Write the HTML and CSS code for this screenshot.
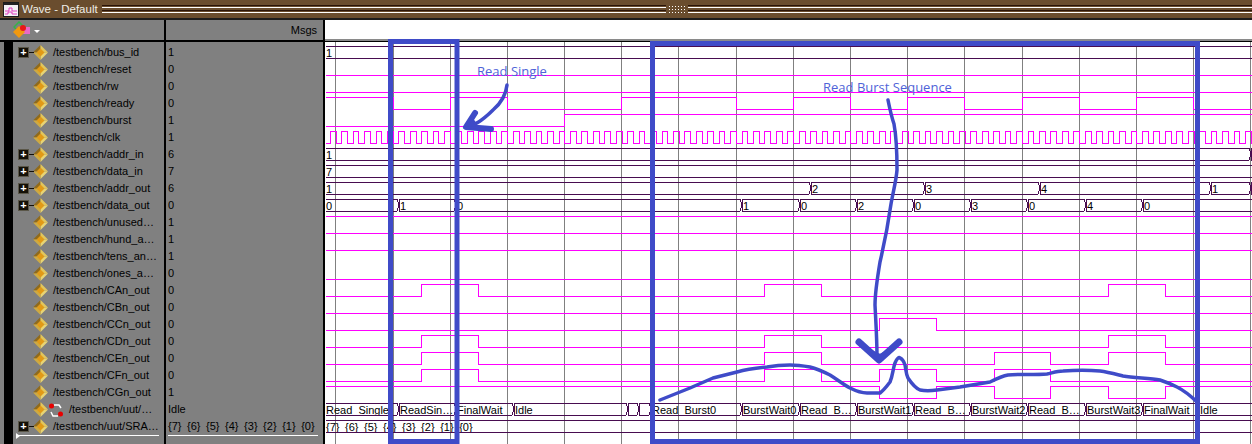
FILE: index.html
```html
<!DOCTYPE html>
<html>
<head>
  <title>Wave - Default</title>
  <link rel="stylesheet" href="styles.css">
</head>
<body>
  <svg class="defs" width="0" height="0">
    <symbol id="diamond" viewBox="0 0 15 15">
      <polygon points="7.5,0 0,7.5 7.5,7.5" fill="#8f6a1c"/>
      <polygon points="7.5,0 15,7.5 7.5,7.5" fill="#e2c65c"/>
      <polygon points="15,7.5 7.5,15 7.5,7.5" fill="#e8d474"/>
      <polygon points="0,7.5 7.5,15 7.5,7.5" fill="#cdaa44"/>
      <polygon points="7.5,3.5 3.5,7.5 7.5,11.5 11.5,7.5" fill="#e19a17"/>
    </symbol>
  </svg>

  <div class="titlebar">
    <svg class="title-icon" width="16" height="15" viewBox="0 0 16 15">
      <rect x="0.5" y="0.5" width="15" height="14" fill="#f4f0f4" stroke="#1c1c1c"/>
      <rect x="1" y="1" width="14" height="2" fill="#222"/>
      <path d="M2 9h4v-3h3v3h5M2 12h3v-2h4v2h5" fill="none" stroke="#e23cc0"/>
    </svg>
    <span class="title-text">Wave - Default</span>
    <div class="grip"></div>
    <div class="grip-dots"></div>
    <div class="grip"></div>
  </div>

  <div class="window">
    <div class="names">
      <div class="pane-head names-head">
        <svg width="18" height="18" viewBox="0 0 18 18">
          <polygon points="6,1 11,6 6,11 1,6" fill="none" stroke="#35b24a" stroke-width="1.5"/>
          <rect x="10" y="6" width="7" height="7" fill="#e868c8"/>
          <polygon points="6,5 12,11 6,17 0,11" fill="#f0980f"/>
          <circle cx="10" cy="7" r="3" fill="#e81818"/>
        </svg>
        <span class="drop-arrow"></span>
      </div>
      <div class="name-list">
        <div class="row"><span class="tree"><span class="expander">+</span></span><svg class="diamond"><use href="#diamond"/></svg><span class="label">/testbench/bus_id</span></div>
        <div class="row"><span class="tree"></span><svg class="diamond"><use href="#diamond"/></svg><span class="label">/testbench/reset</span></div>
        <div class="row"><span class="tree"></span><svg class="diamond"><use href="#diamond"/></svg><span class="label">/testbench/rw</span></div>
        <div class="row"><span class="tree"></span><svg class="diamond"><use href="#diamond"/></svg><span class="label">/testbench/ready</span></div>
        <div class="row"><span class="tree"></span><svg class="diamond"><use href="#diamond"/></svg><span class="label">/testbench/burst</span></div>
        <div class="row"><span class="tree"></span><svg class="diamond"><use href="#diamond"/></svg><span class="label">/testbench/clk</span></div>
        <div class="row"><span class="tree"><span class="expander">+</span></span><svg class="diamond"><use href="#diamond"/></svg><span class="label">/testbench/addr_in</span></div>
        <div class="row"><span class="tree"><span class="expander">+</span></span><svg class="diamond"><use href="#diamond"/></svg><span class="label">/testbench/data_in</span></div>
        <div class="row"><span class="tree"><span class="expander">+</span></span><svg class="diamond"><use href="#diamond"/></svg><span class="label">/testbench/addr_out</span></div>
        <div class="row"><span class="tree"><span class="expander">+</span></span><svg class="diamond"><use href="#diamond"/></svg><span class="label">/testbench/data_out</span></div>
        <div class="row"><span class="tree"></span><svg class="diamond"><use href="#diamond"/></svg><span class="label">/testbench/unused…</span></div>
        <div class="row"><span class="tree"></span><svg class="diamond"><use href="#diamond"/></svg><span class="label">/testbench/hund_a…</span></div>
        <div class="row"><span class="tree"></span><svg class="diamond"><use href="#diamond"/></svg><span class="label">/testbench/tens_an…</span></div>
        <div class="row"><span class="tree"></span><svg class="diamond"><use href="#diamond"/></svg><span class="label">/testbench/ones_a…</span></div>
        <div class="row"><span class="tree"></span><svg class="diamond"><use href="#diamond"/></svg><span class="label">/testbench/CAn_out</span></div>
        <div class="row"><span class="tree"></span><svg class="diamond"><use href="#diamond"/></svg><span class="label">/testbench/CBn_out</span></div>
        <div class="row"><span class="tree"></span><svg class="diamond"><use href="#diamond"/></svg><span class="label">/testbench/CCn_out</span></div>
        <div class="row"><span class="tree"></span><svg class="diamond"><use href="#diamond"/></svg><span class="label">/testbench/CDn_out</span></div>
        <div class="row"><span class="tree"></span><svg class="diamond"><use href="#diamond"/></svg><span class="label">/testbench/CEn_out</span></div>
        <div class="row"><span class="tree"></span><svg class="diamond"><use href="#diamond"/></svg><span class="label">/testbench/CFn_out</span></div>
        <div class="row"><span class="tree"></span><svg class="diamond"><use href="#diamond"/></svg><span class="label">/testbench/CGn_out</span></div>
        <div class="row"><span class="tree"></span><svg class="diamond"><use href="#diamond"/></svg>
          <svg class="fsm-icon" width="16" height="16" viewBox="0 0 16 16">
            <path d="M6 3h5l2 3M10 14H5L3 10" fill="none" stroke="#fff" stroke-width="1.5"/>
            <circle cx="3.5" cy="4" r="2.5" fill="#e80000"/>
            <circle cx="12.5" cy="12" r="2.5" fill="#e80000"/>
          </svg>
          <span class="label">/testbench/uut/…</span></div>
        <div class="row"><span class="tree"><span class="expander">+</span></span><svg class="diamond"><use href="#diamond"/></svg><span class="label">/testbench/uut/SRA…</span></div>
        <div class="scroll-line names-scroll"><span class="scroll-mark"></span></div>
      </div>
    </div>

    <div class="values">
      <div class="pane-head values-head">Msgs</div>
      <div class="value-list">
        <div class="row"><span class="value">1</span></div>
        <div class="row"><span class="value">0</span></div>
        <div class="row"><span class="value">0</span></div>
        <div class="row"><span class="value">0</span></div>
        <div class="row"><span class="value">1</span></div>
        <div class="row"><span class="value">1</span></div>
        <div class="row"><span class="value">6</span></div>
        <div class="row"><span class="value">7</span></div>
        <div class="row"><span class="value">6</span></div>
        <div class="row"><span class="value">0</span></div>
        <div class="row"><span class="value">1</span></div>
        <div class="row"><span class="value">1</span></div>
        <div class="row"><span class="value">1</span></div>
        <div class="row"><span class="value">0</span></div>
        <div class="row"><span class="value">0</span></div>
        <div class="row"><span class="value">0</span></div>
        <div class="row"><span class="value">0</span></div>
        <div class="row"><span class="value">0</span></div>
        <div class="row"><span class="value">0</span></div>
        <div class="row"><span class="value">0</span></div>
        <div class="row"><span class="value">1</span></div>
        <div class="row"><span class="value">Idle</span></div>
        <div class="row"><span class="value">{7} {6} {5} {4} {3} {2} {1} {0}</span></div>
        <div class="scroll-line"></div>
      </div>
    </div>

    <div class="waves">
      <div class="wave-head"></div>
      <svg class="wave-plot" id="plot" width="927" height="402" viewBox="325 42 927 402">
        <g id="traces"></g>
        <g class="ink">
          <rect x="390.5" y="41.5" width="66.5" height="400"/>
          <rect x="652.5" y="43.5" width="545" height="398"/>
          <path class="ink-arrow" d="M507 85C506 95 500 104 493 110C487 116 482 120 477 123L466 127"/>
          <path class="ink-head" d="M475 113L466 127L491 129"/>
          <path class="ink-fill" d="M472 118L466 127L478 128Z"/>
          <path class="ink-arrow" d="M888 100C890 110 892 118 894 124C897 140 897 155 897 170C896 182 893 192 891 204C888 225 884 245 880 262C877 280 875 295 875 305C876 325 877 340 877 357"/>
          <path class="ink-head wide" d="M859 342L879 360L899 342"/>
          <path class="ink-fill" d="M865 348L879 362L893 348L880 355Z"/>
          <path class="ink-curve" d="M660 400L690 388L713 378L737 372C748 369 757 368 767 367C778 365 785 365 790 365C798 365 804 366 810 367C818 369 824 372 830 375C838 380 844 385 850 388C856 391 861 393 867 393L880 393C884 390 887 386 890 382C893 375 893 368 895 363C897 358 899 357 900 358C903 359 904 362 905 365C906 370 906 374 908 378C912 384 915 388 920 390C925 391 930 391 937 390C945 389 952 388 960 387L990 382C996 379 1002 376 1008 375C1020 374 1035 375 1047 374C1052 373 1057 371 1063 371C1075 370 1090 370 1100 371C1108 372 1115 374 1123 376C1135 378 1150 378 1160 380C1166 382 1171 384 1177 387C1185 391 1192 397 1198 403"/>
          <text class="ink-text" x="477" y="76">Read Single</text>
          <text class="ink-text" x="823" y="92">Read Burst Sequence</text>
        </g>
      </svg>
    </div>
  </div>

  <script>
    const SVG_NS = "http://www.w3.org/2000/svg";
    const traces = document.getElementById("traces");

    const LEFT = 326;
    const RIGHT = 1252;
    const gridLines = [335, 393, 450, 507, 564, 621, 678, 736, 793, 850, 907, 964, 1022, 1079, 1136, 1193, 1250];

    // row index, first level, edges
    const bits = [
      [1, 0, []],
      [2, 0, []],
      [3, 1, [393, 450, 507, 621, 736, 793, 850, 907, 964, 1022, 1079, 1136, 1193]],
      [4, 0, [564]],
      [10, 1, []],
      [11, 1, []],
      [12, 1, []],
      [13, 0, []],
      [14, 0, [421, 478, 764, 821, 1108, 1165]],
      [15, 0, []],
      [16, 0, [879, 936]],
      [17, 0, [421, 478, 764, 821, 1108, 1165]],
      [18, 0, [421, 478, 764, 821, 994, 1050, 1108, 1165]],
      [19, 0, [421, 478, 764, 821, 879, 936, 994, 1050]],
      [20, 1, [879, 936, 994, 1050, 1108, 1165]]
    ];

    // row index, then [x, text] for every value
    const buses = [
      [0, [[324, "1"]]],
      [6, [[324, "1"], [1250, ""]]],
      [7, [[324, "7"]]],
      [8, [[324, "1"], [810, "2"], [924, "3"], [1039, "4"], [1210, "1"], [1250, ""]]],
      [9, [[324, "0"], [398, "1"], [455, "0"], [741, "1"], [799, "0"], [856, "2"], [913, "0"], [970, "3"], [1027, "0"], [1085, "4"], [1142, "0"]]],
      [21, [[324, "Read_Single"], [398, "ReadSin…"], [455, "FinalWait"], [513, "Idle"], [627, ""], [638, ""], [650, "Read_Burst0"], [741, "BurstWait0"], [799, "Read_B…"], [856, "BurstWait1"], [913, "Read_B…"], [970, "BurstWait2"], [1027, "Read_B…"], [1085, "BurstWait3"], [1142, "FinalWait"], [1198, "Idle"]]],
      [22, [[324, "{7} {6} {5} {4} {3} {2} {1} {0}"]]]
    ];

    function bottomOf(row) {
      return 58 + 17 * row;
    }

    function addPath(className, d) {
      const path = document.createElementNS(SVG_NS, "path");
      path.setAttribute("class", className);
      path.setAttribute("d", d);
      traces.appendChild(path);
    }

    function addText(x, y, text) {
      const label = document.createElementNS(SVG_NS, "text");
      label.setAttribute("class", "bus-text");
      label.setAttribute("x", x);
      label.setAttribute("y", y);
      label.textContent = text;
      traces.appendChild(label);
    }

    function bitPath(bottom, level, edges) {
      const low = bottom + 0.5;
      const high = bottom - 11.5;
      let y = level ? high : low;
      let d = `M${LEFT} ${y}`;
      edges.forEach(function (x) {
        d += `H${x + 0.5}`;
        y = y === high ? low : high;
        d += `V${y}`;
      });
      return d + `H${RIGHT}`;
    }

    gridLines.forEach(function (x) {
      addPath("grid-line", `M${x + 0.5} 42V444`);
    });

    bits.forEach(function (bit) {
      addPath("bit-line", bitPath(bottomOf(bit[0]), bit[1], bit[2]));
    });

    // clock: falling edge every 11.44px, on the grid every 5 cycles
    const clockEdges = [330];
    for (let k = 0; k < 81; k++) {
      clockEdges.push(Math.round(335.5 + 11.44 * k));
      clockEdges.push(Math.round(341.2 + 11.44 * k));
    }
    addPath("bit-line", bitPath(bottomOf(5), 0, clockEdges.filter(function (x) { return x < RIGHT; })));

    buses.forEach(function (bus) {
      const bottom = bottomOf(bus[0]);
      const top = bottom - 12;
      const mid = bottom - 6;
      let d = "";
      bus[1].forEach(function (value, i) {
        const x = value[0];
        const next = i + 1 < bus[1].length ? bus[1][i + 1][0] : RIGHT + 4;
        d += `M${x + 2} ${top + 0.5}H${next - 1}M${x + 2} ${bottom + 0.5}H${next - 1}`;
        if (i > 0) {
          d += `M${x - 1} ${top + 0.5}L${x} ${mid - 3}V${mid + 3}L${x - 1} ${bottom + 0.5}`;
          d += `M${x + 2} ${top + 0.5}L${x + 1} ${mid - 3}V${mid + 3}L${x + 2} ${bottom + 0.5}`;
        }
        if (value[1]) {
          addText(x + 2, bottom - 1, value[1]);
        }
      });
      addPath("bus-line", d);
    });
  </script>
</body>
</html>
```

FILE: styles.css
```css
html, body {
  margin: 0;
  height: 444px;
  overflow: hidden;
}
body {
  font-family: "Liberation Sans", Arial, sans-serif;
  font-size: 11px;
  color: #000;
  background-color: #808080;
}
.defs {
  display: block;
}

.titlebar {
  display: flex;
  align-items: center;
  height: 18px;
  padding-left: 3px;
  background-color: #6a4d2e;
  border-bottom: 2px solid #1c1c1c;
}
.title-icon {
  flex-shrink: 0;
}
.title-text {
  flex-shrink: 0;
  width: 80px;
  margin-left: 3px;
  font-size: 11.5px;
  white-space: nowrap;
  color: #efeee6;
}
.grip {
  flex: 1;
  height: 8px;
  background: linear-gradient(to bottom,
    #2a1408 0, #2a1408 1px,
    #6a4d2e 1px, #6a4d2e 2px,
    #ffffff 2px, #ffffff 3px,
    #6a4d2e 3px, #6a4d2e 5px,
    #2a1408 5px, #2a1408 6px,
    #6a4d2e 6px, #6a4d2e 7px,
    #ffffff 7px, #ffffff 8px);
}
.grip-dots {
  width: 18px;
  height: 8px;
  margin: 0 2px;
  background-image: radial-gradient(circle, #ffffff 0.9px, transparent 1px);
  background-size: 3px 3px;
}

.window {
  display: flex;
  height: 424px;
}
.names {
  width: 164px;
  flex-shrink: 0;
  border-right: 2px solid #000;
}
.values {
  width: 157px;
  flex-shrink: 0;
  border-right: 2px solid #000;
}
.waves {
  flex: 1;
  min-width: 0;
}

.pane-head {
  display: flex;
  align-items: center;
  height: 20px;
  border-bottom: 2px solid #000;
}
.names-head {
  padding-left: 13px;
  gap: 3px;
}
.drop-arrow {
  margin-top: 3px;
  border-left: 3px solid transparent;
  border-right: 3px solid transparent;
  border-top: 3px solid #fff;
}
.values-head {
  justify-content: flex-end;
  padding-right: 6px;
}
.wave-head {
  height: 19px;
  background-color: #fff;
  border-bottom: 2px solid #8a8a8a;
}
.wave-plot {
  display: block;
  background-color: #fff;
  border-top: 1px solid #000;
  overflow: visible;
}

.name-list {
  height: 400px;
  margin-left: 4px;
  padding-top: 2px;
  border-left: 9px solid #000;
}
.value-list {
  padding: 2px 0 0 2px;
  word-spacing: 2.5px;
}
.row {
  display: flex;
  align-items: center;
  height: 17px;
  white-space: nowrap;
}
.tree {
  display: flex;
  flex-shrink: 0;
  align-items: center;
  width: 20px;
  padding-left: 6px;
  box-sizing: border-box;
}
.expander {
  position: relative;
  width: 9px;
  height: 9px;
  line-height: 8px;
  text-align: center;
  font-size: 11px;
  font-weight: bold;
  color: #fff;
  background-color: #141008;
  box-shadow: 0 0 0 1px #5a5648;
}
.expander::after {
  content: "";
  position: absolute;
  left: 10px;
  top: 4px;
  width: 5px;
  height: 1px;
  background-color: #141008;
}
.diamond {
  width: 15px;
  height: 15px;
  flex-shrink: 0;
}
.label {
  margin-left: 5px;
  padding-bottom: 2px;
}
.value {
  padding-bottom: 2px;
}
.fsm-icon {
  flex-shrink: 0;
}

.scroll-line {
  height: 1px;
  margin-right: 5px;
  background-color: #fff;
}
.names-scroll {
  position: relative;
  margin-left: 4px;
}
.scroll-mark {
  position: absolute;
  left: -1px;
  top: -2px;
  border-left: 4px solid #fff;
  border-top: 3px solid transparent;
  border-bottom: 3px solid transparent;
}

.grid-line {
  fill: none;
  stroke: #808080;
  shape-rendering: crispEdges;
}
.bit-line {
  fill: none;
  stroke: #ff00ff;
  shape-rendering: crispEdges;
}
.bus-line {
  fill: none;
  stroke: #480c50;
  shape-rendering: crispEdges;
}
.bus-text {
  font-size: 11px;
  word-spacing: 2.5px;
  fill: #000;
}

.ink rect {
  fill: none;
  stroke: #3f4bc8;
  stroke-width: 5;
}
.ink-arrow {
  fill: none;
  stroke: #3f4bc8;
  stroke-width: 3.5;
  stroke-linecap: round;
}
.ink-head {
  fill: none;
  stroke: #3f4bc8;
  stroke-width: 6;
  stroke-linecap: round;
  stroke-linejoin: round;
}
.ink-head.wide {
  stroke-width: 7;
}
.ink-fill {
  fill: #3f4bc8;
  stroke: #3f4bc8;
  stroke-width: 2;
}
.ink-curve {
  fill: none;
  stroke: #3f4bc8;
  stroke-width: 3.5;
  stroke-linecap: round;
  stroke-linejoin: round;
}
.ink-text {
  font-family: "Open Sans", sans-serif;
  font-size: 13px;
  fill: #4f63d8;
}
```
